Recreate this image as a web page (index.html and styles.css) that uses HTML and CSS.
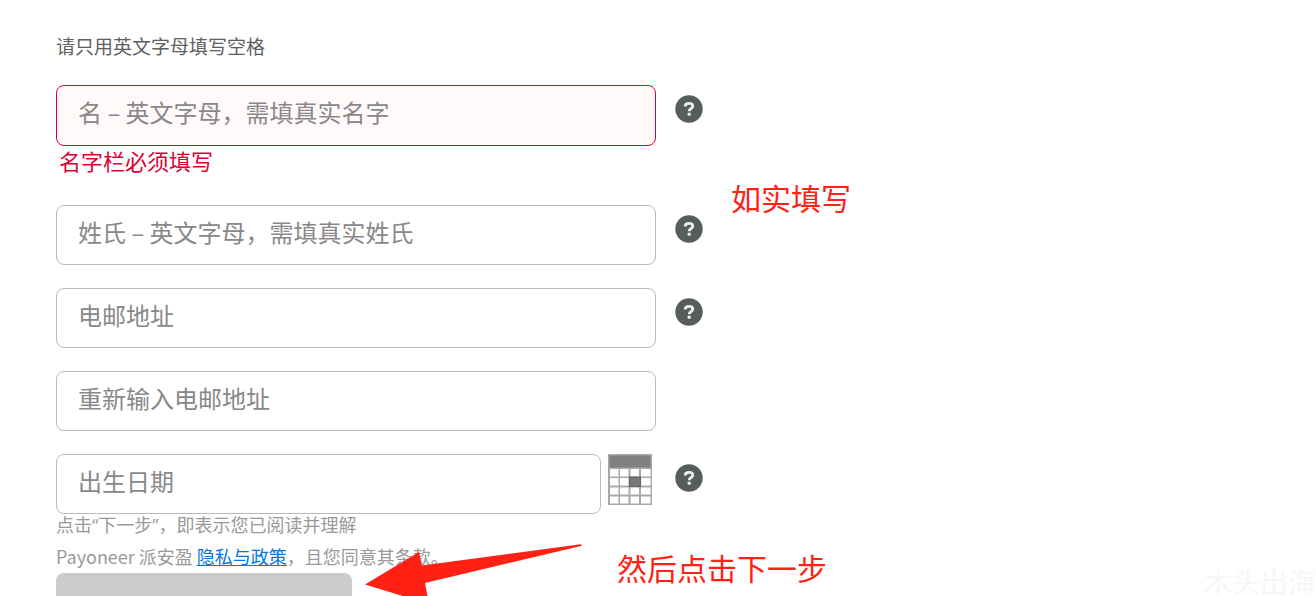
FILE: index.html
```
<!DOCTYPE html>
<html lang="zh-CN">
<head>
    <meta charset="UTF-8">
    <meta name="viewport" content="width=device-width, initial-scale=1.0">
    <title>Payoneer 派安盈</title>
    <link rel="stylesheet" href="styles.css">
</head>
<body>
    <svg width="0" height="0" class="symbols" aria-hidden="true">
        <symbol id="help" viewBox="0 0 28 28">
            <circle cx="14" cy="14" r="13.7" fill="#555d5d"/>
            <path d="M10.2 11.4C10.2 9.2 11.8 8.4 14 8.4C16.2 8.4 17.8 9.400 17.8 11.2C17.8 13.600 14.2 13.400 14.2 16.2" fill="none" stroke="#eee" stroke-width="2.800"/>
            <rect x="12.600" y="17.800" width="3.200" height="3" rx="0.800" fill="#eee"/>
        </symbol>
    </svg>

    <main class="page">
        <form class="signup">
            <p class="intro">请只用英文字母填写空格</p>

            <div class="row">
                <div class="field">
                    <input class="box invalid" type="text" id="firstName" aria-label="名" aria-describedby="firstNameError" placeholder="名 – 英文字母，需填真实名字">
                    <p class="error" id="firstNameError">名字栏必须填写</p>
                </div>
                <button class="help" type="button" aria-label="帮助"><svg><use href="#help"/></svg></button>
            </div>

            <div class="row">
                <div class="field">
                    <input class="box" type="text" id="lastName" aria-label="姓氏" placeholder="姓氏 – 英文字母，需填真实姓氏">
                </div>
                <button class="help" type="button" aria-label="帮助"><svg><use href="#help"/></svg></button>
            </div>

            <div class="row">
                <div class="field">
                    <input class="box" type="email" id="email" aria-label="电邮地址" placeholder="电邮地址">
                </div>
                <button class="help" type="button" aria-label="帮助"><svg><use href="#help"/></svg></button>
            </div>

            <div class="row">
                <div class="field">
                    <input class="box" type="email" id="emailAgain" aria-label="重新输入电邮地址" placeholder="重新输入电邮地址">
                </div>
            </div>

            <div class="row">
                <div class="field date">
                    <input class="box" type="text" id="birthday" aria-label="出生日期" placeholder="出生日期">
                    <button class="calendar" type="button" aria-label="选择日期">
                        <svg viewBox="0 0 44 51">
                            <rect width="44" height="51" fill="#aaaaa5"/>
                            <rect x="1.5" y="1.5" width="41" height="12" fill="#808080"/>
                            <path d="M2 15h8.500v7.500H2zM12 15h8.500v7.500H12zM22.500 15h8.500v7.500h-8.500zM33 15h9.500v7.500H33zM2 24h8.500v7.500H2zM12 24h8.500v7.500H12zM33 24h9.500v7.500H33zM2 33.500h8.500v7H2zM12 33.500h8.500v7H12zM22.500 33.500h8.500v7h-8.500zM33 33.500h9.500v7H33zM2 42.500h8.500v7H2zM12 42.500h8.500v7H12zM22.500 42.500h8.500v7h-8.500zM33 42.500h9.500v7H33z" fill="#fff"/>
                            <rect x="21.500" y="23" width="11" height="9.500" fill="#777" stroke="#606060"/>
                        </svg>
                    </button>
                </div>
                <button class="help" type="button" aria-label="帮助"><svg><use href="#help"/></svg></button>
            </div>

            <p class="terms">
                点击<span class="quote">“</span>下一步<span class="quote">”</span>，即表示您已阅读并理解<br>
                Payoneer 派安盈 <a href="#">隐私与政策</a>，且您同意其条款。
            </p>
            <button class="next" type="submit" aria-label="下一步" disabled></button>
        </form>

        <!-- notes over the form -->
        <p class="note note-fill">如实填写</p>
        <p class="note note-next">然后点击下一步</p>
        <svg class="arrow" viewBox="0 0 218 64" aria-hidden="true">
            <path d="M0 40.500L54 8L57 21.500L216 0.300L217 1.700L60 39L64 60Z" fill="#ff2113"/>
        </svg>
        <p class="watermark">木头出海</p>
    </main>
</body>
</html>
```
FILE: styles.css
```
* {
    box-sizing: border-box;
}

body {
    margin: 0;
    background-color: #fff;
    font-family: "Noto Sans CJK SC", sans-serif;
}

p {
    margin: 0;
}

button {
    padding: 0;
    border: none;
    background: none;
    cursor: pointer;
}

svg {
    display: block;
}

.symbols {
    position: absolute;
}

.page {
    position: relative;
    height: 100vh;
    overflow: hidden;
    padding: 31px 56px 0;
}

.signup {
    max-width: 647px;
}

.intro {
    margin-bottom: 24px;
    font-size: 19px;
    line-height: 30px;
    color: #606060;
}

.row {
    display: flex;
    align-items: flex-start;
    gap: 19px;
    margin-bottom: 23px;
}

.field {
    flex: 1;
    max-width: 600px;
}

.box {
    display: block;
    width: 100%;
    height: 60px;
    padding: 0 21px 8px;
    border: 1px solid #b9b9b9;
    border-radius: 8px;
    background-color: #fff;
    font-family: inherit;
    font-size: 24px;
    color: #555;
}

.box::placeholder {
    color: #888;
    opacity: 1;
}

.box.invalid {
    height: 61px;
    border-color: #dc0032;
    background-color: #fffaf9;
}

.error {
    padding: 0 3px 8px;
    font-size: 22px;
    line-height: 28px;
    color: #dc0032;
}

.help {
    margin-top: 10px;
}

.help svg {
    width: 28px;
    height: 28px;
}

.date {
    display: flex;
    gap: 7px;
    padding-right: 4px;
}

.date .box {
    flex: 1;
}

.calendar {
    align-self: flex-start;
}

.calendar svg {
    width: 44px;
    height: 51px;
}

.terms {
    margin: -28px 0 1px;
    font-size: 18px;
    line-height: 31px;
    color: #999;
}

.quote {
    font-family: "Open Sans", sans-serif;
}

.terms a {
    color: #0078e0;
}

.next {
    display: block;
    width: 296px;
    height: 60px;
    border-radius: 8px;
    background-color: #cbcbcb;
}

.note {
    position: absolute;
    font-size: 30px;
    line-height: 40px;
    color: #ff2113;
}

.note-fill {
    left: 731px;
    top: 177px;
}

.note-next {
    left: 617px;
    top: 547px;
}

.arrow {
    position: absolute;
    left: 365px;
    top: 544px;
    width: 218px;
    height: 64px;
}

.watermark {
    position: absolute;
    right: 0;
    bottom: 0;
    font-size: 28px;
    line-height: 30px;
    color: #f5f7f7;
}
```
